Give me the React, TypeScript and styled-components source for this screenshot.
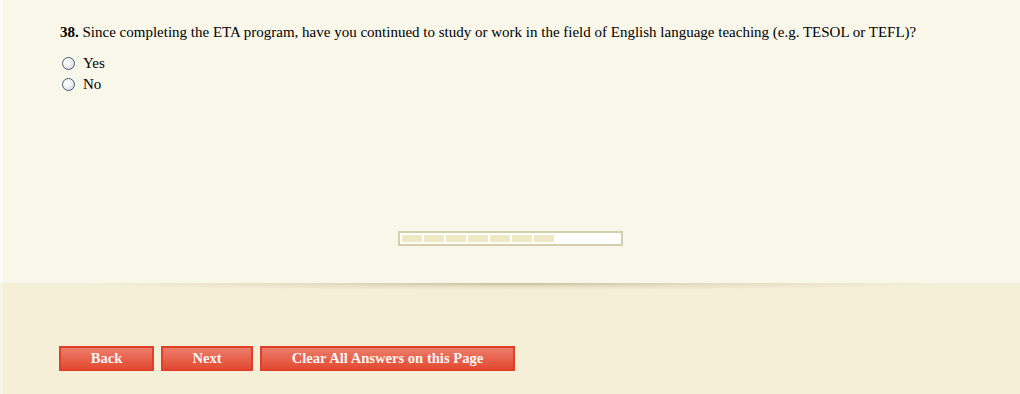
import React from "react";
import styled, { createGlobalStyle } from "styled-components";

const GlobalStyle = createGlobalStyle`
  html, body {
    margin: 0;
    padding: 0;
    background: #f9f7ea;
  }
  body {
    font-family: "Liberation Serif", "Times New Roman", serif;
    color: #000;
  }
`;

const Page = styled.div`
  width: 1020px;
  height: 394px;
  display: flex;
  flex-direction: column;
  box-shadow: inset 3px 0 0 #fcfbf5;
`;

const Survey = styled.section`
  height: 283px;
  box-sizing: border-box;
  padding: 24px 0 37px;
  display: flex;
  flex-direction: column;
`;

const QuestionBlock = styled.div`
  padding-left: 60px;
`;

const Question = styled.div`
  font-size: 15px;
  line-height: 17px;
  margin-bottom: 16px;
`;

const Options = styled.div`
  display: flex;
  flex-direction: column;
  gap: 8px;
`;

const Option = styled.label`
  display: flex;
  align-items: center;
  gap: 8px;
  height: 13px;
  font-size: 15px;
  line-height: 13px;
  padding-left: 2px;
`;

const Radio = styled.input.attrs({ type: "radio" })`
  appearance: none;
  margin: 0;
  width: 13px;
  height: 13px;
  border-radius: 50%;
  border: 1px solid #3f5f80;
  box-sizing: border-box;
  background: radial-gradient(circle at 35% 35%, #ffffff 0%, #f1f1ee 45%, #c9cdd2 100%);
`;

const Progress = styled.div`
  margin: auto auto 0;
  width: 225px;
  height: 15px;
  box-sizing: border-box;
  border: 2px solid #d4cfac;
  background: #fff;
  padding: 2px;
  display: flex;
  gap: 2px;
`;

const Step = styled.div`
  width: 20px;
  height: 7px;
  background: #eee8c4;
`;

const Footer = styled.footer`
  flex: 1;
  position: relative;
  background: #f5efd7;
  box-shadow: inset 3px 0 0 #f8f4e4;
  padding: 63px 0 0 59px;
  box-sizing: border-box;
  display: flex;
  align-items: flex-start;
  gap: 7px;

  &::before {
    content: "";
    position: absolute;
    left: 85px;
    right: 80px;
    top: 0;
    height: 7px;
    background: radial-gradient(ellipse 52% 100% at 50% 0%, rgba(150, 140, 100, 0.5) 0%, rgba(185, 175, 135, 0.25) 50%, rgba(245, 239, 215, 0) 100%);
  }
`;

const Button = styled.button<{ $w: number }>`
  width: ${(p) => p.$w}px;
  height: 25px;
  box-sizing: border-box;
  border: 2px solid #e0402a;
  background: linear-gradient(#ec7d6b, #e24a31);
  color: #fff6f2;
  font-family: "Liberation Serif", "Times New Roman", serif;
  font-weight: bold;
  font-size: 14.6px;
  padding: 0;
  cursor: pointer;
`;

export default function App() {
  return (
    <>
      <GlobalStyle />
      <Page>
        <Survey>
          <QuestionBlock>
            <Question>
              <b>38.</b> Since completing the ETA program, have you continued to study or work in the field of
              English language teaching (e.g. TESOL or TEFL)?
            </Question>
            <Options>
              <Option>
                <Radio name="q38" />
                Yes
              </Option>
              <Option>
                <Radio name="q38" />
                No
              </Option>
            </Options>
          </QuestionBlock>
          <Progress>
            {Array.from({ length: 7 }).map((_, i) => (
              <Step key={i} />
            ))}
          </Progress>
        </Survey>
        <Footer>
          <Button $w={95}>Back</Button>
          <Button $w={92}>Next</Button>
          <Button $w={255}>Clear All Answers on this Page</Button>
        </Footer>
      </Page>
    </>
  );
}
